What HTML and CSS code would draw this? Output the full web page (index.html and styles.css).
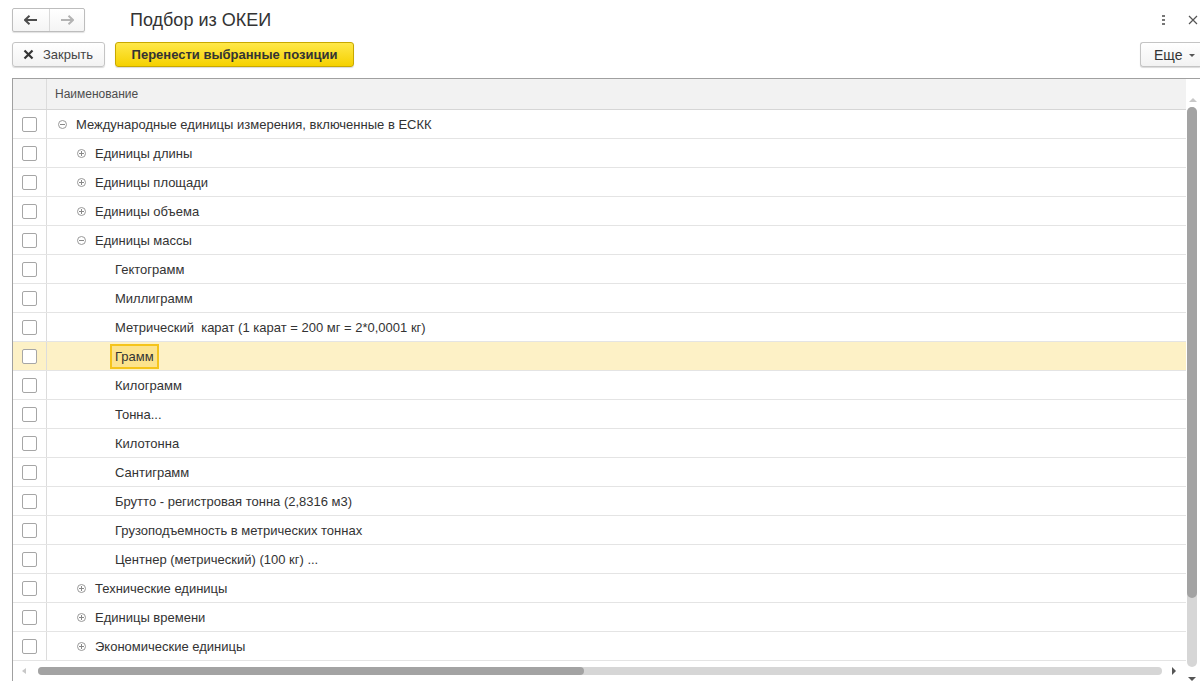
FILE: index.html
```html
<!DOCTYPE html>
<html lang="ru">
<head>
<meta charset="utf-8">
<link rel="stylesheet" href="styles.css">
</head>
<body>
<div class="app">
  <div class="titlebar">
    <div class="nav">
      <button class="nav-btn"><svg width="14" height="10" viewBox="0 0 14 10"><path d="M1 5h12M5.5 0.8L1 5l4.5 4.2" stroke="#4d4d4d" stroke-width="2" fill="none"/></svg></button>
      <button class="nav-btn"><svg width="14" height="10" viewBox="0 0 14 10"><path d="M1 5h12M8.5 0.8L13 5 8.5 9.2" stroke="#b3b3b3" stroke-width="2" fill="none"/></svg></button>
    </div>
    <h1 class="title">Подбор из ОКЕИ</h1>
    <div class="win-actions">
      <span class="kebab"><i></i><i></i><i></i></span>
      <svg class="close" width="10" height="10" viewBox="0 0 10 10"><path d="M1 1l8 8M9 1l-8 8" stroke="#555" stroke-width="1.2"/></svg>
    </div>
  </div>
  <div class="toolbar">
    <button class="btn btn-close"><svg width="11" height="11" viewBox="0 0 11 11"><path d="M1.5 1.5l8 8M9.5 1.5l-8 8" stroke="#333" stroke-width="2.2"/></svg>Закрыть</button>
    <button class="btn btn-primary">Перенести выбранные позиции</button>
    <span class="spacer"></span>
    <button class="btn btn-more">Еще <span class="caret"></span></button>
  </div>
  <div class="table">
    <div class="table-body">
      <div class="head">
        <div class="c-check"></div>
        <div class="c-name">Наименование</div>
      </div>
      <div class="rows">
        <div class="row"><div class="c-check"><span class="cb"></span></div><div class="c-name l0"><span class="tg minus"></span>Международные единицы измерения, включенные в ЕСКК</div></div>
        <div class="row"><div class="c-check"><span class="cb"></span></div><div class="c-name l1"><span class="tg plus"></span>Единицы длины</div></div>
        <div class="row"><div class="c-check"><span class="cb"></span></div><div class="c-name l1"><span class="tg plus"></span>Единицы площади</div></div>
        <div class="row"><div class="c-check"><span class="cb"></span></div><div class="c-name l1"><span class="tg plus"></span>Единицы объема</div></div>
        <div class="row"><div class="c-check"><span class="cb"></span></div><div class="c-name l1"><span class="tg minus"></span>Единицы массы</div></div>
        <div class="row"><div class="c-check"><span class="cb"></span></div><div class="c-name l2">Гектограмм</div></div>
        <div class="row"><div class="c-check"><span class="cb"></span></div><div class="c-name l2">Миллиграмм</div></div>
        <div class="row"><div class="c-check"><span class="cb"></span></div><div class="c-name l2">Метрический&nbsp; карат (1 карат = 200 мг = 2*0,0001 кг)</div></div>
        <div class="row selected"><div class="c-check"><span class="cb"></span></div><div class="c-name l2"><span class="focus">Грамм</span></div></div>
        <div class="row"><div class="c-check"><span class="cb"></span></div><div class="c-name l2">Килограмм</div></div>
        <div class="row"><div class="c-check"><span class="cb"></span></div><div class="c-name l2">Тонна...</div></div>
        <div class="row"><div class="c-check"><span class="cb"></span></div><div class="c-name l2">Килотонна</div></div>
        <div class="row"><div class="c-check"><span class="cb"></span></div><div class="c-name l2">Сантиграмм</div></div>
        <div class="row"><div class="c-check"><span class="cb"></span></div><div class="c-name l2">Брутто - регистровая тонна (2,8316 м3)</div></div>
        <div class="row"><div class="c-check"><span class="cb"></span></div><div class="c-name l2">Грузоподъемность в метрических тоннах</div></div>
        <div class="row"><div class="c-check"><span class="cb"></span></div><div class="c-name l2">Центнер (метрический) (100 кг) ...</div></div>
        <div class="row"><div class="c-check"><span class="cb"></span></div><div class="c-name l1"><span class="tg plus"></span>Технические единицы</div></div>
        <div class="row"><div class="c-check"><span class="cb"></span></div><div class="c-name l1"><span class="tg plus"></span>Единицы времени</div></div>
        <div class="row"><div class="c-check"><span class="cb"></span></div><div class="c-name l1"><span class="tg plus"></span>Экономические единицы</div></div>
        <div class="row tail"><div class="c-check"></div><div class="c-name"></div></div>
      </div>
      <div class="hscroll">
        <span class="arr-l"></span>
        <div class="htrack"><div class="hthumb"></div></div>
        <span class="arr-r"></span>
      </div>
    </div>
    <div class="vscroll">
      <span class="arr-u"></span>
      <div class="vtrack"><div class="vthumb"></div></div>
      <span class="arr-d"></span>
    </div>
  </div>
</div>
</body>
</html>
```

FILE: styles.css
```css
* { box-sizing: border-box; }
html, body { margin: 0; padding: 0; background: #fff; }
body {
  font-family: Arial, "Liberation Sans", sans-serif;
  font-size: 13px;
  color: #333;
  width: 1200px;
  height: 681px;
  overflow: hidden;
}
.app { display: flex; flex-direction: column; height: 681px; }
.titlebar {
  display: flex;
  align-items: center;
  height: 40px;
  padding: 0 0 0 12px;
}
.nav {
  display: flex;
  height: 24px;
  border: 1px solid #bdbdbd;
  border-radius: 2px;
  background: linear-gradient(#fff, #f4f4f4);
  box-shadow: 0 1px 1px rgba(0,0,0,0.12);
}
.nav-btn {
  width: 36px;
  height: 22px;
  border: 0;
  background: transparent;
  padding: 0;
  display: flex;
  align-items: center;
  justify-content: center;
}
.nav-btn + .nav-btn { border-left: 1px solid #d9d9d9; width: 35px; }
.title {
  margin: 0 0 0 45px;
  font-size: 18px;
  font-weight: normal;
  color: #333;
}
.win-actions {
  margin-left: auto;
  display: flex;
  align-items: center;
  gap: 23px;
  padding-right: 2px;
}
.kebab { display: flex; flex-direction: column; gap: 2px; }
.kebab i { display: block; width: 3px; height: 2px; background: #777; }
.toolbar {
  display: flex;
  align-items: center;
  height: 25px;
  margin-top: 2px;
  padding-left: 12px;
  gap: 10px;
}
.btn {
  height: 25px;
  border: 1px solid #c4c4c4;
  border-radius: 3px;
  background: linear-gradient(#fff, #f2f2f2);
  box-shadow: 0 1px 1px rgba(0,0,0,0.15);
  font-family: inherit;
  font-size: 13px;
  color: #444;
  padding: 0 10px;
  display: flex;
  align-items: center;
}
.btn-close { width: 93px; gap: 9px; padding-left: 10px; }
.btn-primary {
  width: 239px;
  justify-content: center;
  background: linear-gradient(#ffe84a, #f5d100);
  border-color: #c8a800;
  font-weight: bold;
  color: #333;
}
.spacer { flex: 1; }
.btn-more {
  width: 60px;
  padding-left: 13px;
  border-right: 0;
  border-radius: 3px 0 0 3px;
  font-size: 14px;
  color: #333;
  gap: 6px;
}
.caret {
  width: 0; height: 0;
  border-left: 3px solid transparent;
  border-right: 3px solid transparent;
  border-top: 3px solid #555;
  margin-top: 1px;
}
.table {
  margin: 11px 0 0 12px;
  border-top: 1px solid #a0a0a0;
  border-left: 1px solid #a0a0a0;
  flex: 1;
  display: flex;
  min-height: 0;
}
.table-body { flex: 1; display: flex; flex-direction: column; min-width: 0; }
.head {
  display: flex;
  height: 31px;
  flex: none;
  background: #f2f2f2;
  border-bottom: 1px solid #d6d6d6;
  color: #4d4d4d;
  font-size: 12px;
}
.head .c-name { padding-left: 8px; }
.c-check {
  width: 34px;
  flex: none;
  border-right: 1px solid #dcdcdc;
  display: flex;
  align-items: center;
  justify-content: center;
}
.c-name {
  flex: 1;
  display: flex;
  align-items: center;
  white-space: nowrap;
}
.rows { flex: 1; display: flex; flex-direction: column; overflow: hidden; }
.row {
  display: flex;
  height: 29px;
  flex: none;
  border-bottom: 1px solid #e4e4e4;
}
.row.tail { flex: 1; border-bottom: 0; height: auto; }
.row.selected { background: #fdf1c6; }
.cb {
  width: 15px;
  height: 15px;
  border: 1px solid #a6a6a6;
  border-radius: 2px;
  background: #fff;
}
.l0 { padding-left: 11px; }
.l1 { padding-left: 30px; }
.l2 { padding-left: 68px; }
.tg {
  width: 9px;
  height: 9px;
  border: 1px solid #999;
  border-radius: 50%;
  margin-right: 9px;
  position: relative;
  flex: none;
}
.tg::before {
  content: "";
  position: absolute;
  left: 1px; top: 3px;
  width: 5px; height: 1px;
  background: #888;
}
.tg.plus::after {
  content: "";
  position: absolute;
  left: 3px; top: 1px;
  width: 1px; height: 5px;
  background: #888;
}
.focus {
  margin-left: -5px;
  padding: 0 3px;
  height: 25px;
  display: flex;
  align-items: center;
  background: #fce38d;
  border: 2px solid #f5c41b;
}
.hscroll {
  height: 20px;
  flex: none;
  display: flex;
  align-items: center;
}
.arr-l {
  width: 0; height: 0;
  border-top: 3px solid transparent;
  border-bottom: 3px solid transparent;
  border-right: 4px solid #c8c8c8;
  margin-left: 9px;
  margin-right: 12px;
}
.arr-r {
  width: 0; height: 0;
  border-top: 4px solid transparent;
  border-bottom: 4px solid transparent;
  border-left: 4px solid #555;
  margin-left: 10px;
  margin-right: 10px;
}
.htrack {
  flex: 1;
  height: 8px;
  background: #d6d6d6;
  border-radius: 4px;
}
.hthumb {
  width: 546px;
  height: 8px;
  background: #a3a3a3;
  border-radius: 4px;
}
.vscroll {
  width: 14px;
  flex: none;
  display: flex;
  flex-direction: column;
  align-items: center;
  padding-top: 19px;
}
.arr-u {
  width: 0; height: 0;
  border-left: 4px solid transparent;
  border-right: 4px solid transparent;
  border-bottom: 4px solid #c8c8c8;
}
.vtrack {
  margin-top: 5px;
  width: 10px;
  height: 566px;
  background: #d6d6d6;
  border-radius: 5px;
  margin-left: -3px;
}
.vthumb {
  width: 10px;
  height: 491px;
  background: #a3a3a3;
  border-radius: 5px;
}
.arr-d {
  margin-top: 10px;
  margin-left: -3px;
  width: 0; height: 0;
  border-left: 4px solid transparent;
  border-right: 4px solid transparent;
  border-top: 4px solid #555;
}
```
